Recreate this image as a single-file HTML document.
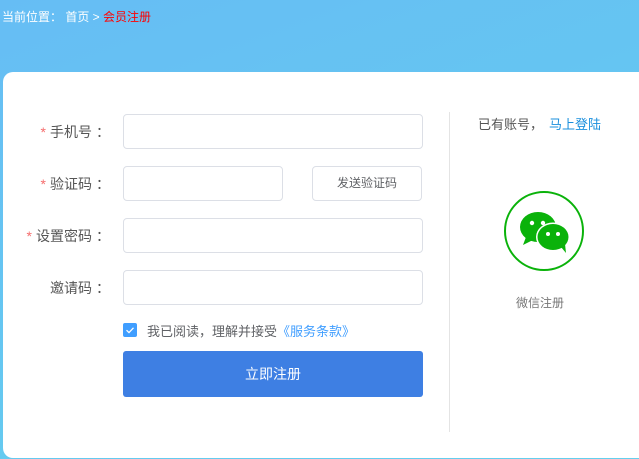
<!DOCTYPE html>
<html><head><meta charset="utf-8"><style>
*{margin:0;padding:0;box-sizing:border-box}
body{width:639px;height:459px;overflow:hidden;background:linear-gradient(160deg,#66bdf4,#64d0ee);font-family:"Liberation Sans","Noto Sans CJK SC",sans-serif;position:relative}
.bc{position:absolute;left:2px;top:8px;font-size:12px;color:#fff}
.bc span{color:#f00}
.card{position:absolute;left:3px;top:72px;width:650px;height:386px;background:#fff;border-radius:10px}
.lab{position:absolute;width:107px;text-align:right;font-size:14px;color:#555;left:0}
.lab i{color:#f56c6c;font-style:normal;margin-right:4px}
.lab b{font-weight:normal;padding-left:4px}
.in{position:absolute;border:1px solid #dcdfe6;border-radius:4px;height:35px}
.btn{position:absolute;left:309px;top:94px;width:110px;height:35px;border:1px solid #dcdfe6;border-radius:4px;font-size:12px;color:#606266;text-align:center;line-height:33px}
.chk{position:absolute;left:120px;top:251px;width:14px;height:14px;background:#409eff;border-radius:2px}
.agree{position:absolute;left:144px;top:249px;font-size:13px;color:#606266}
.agree a{color:#409eff}
.sub{position:absolute;left:120px;top:279px;width:300px;height:46px;background:#3e7fe3;border-radius:3px;color:#fff;font-size:14px;text-align:center;line-height:46px}
.div{position:absolute;left:446px;top:40px;width:1px;height:320px;background:#e4e4e4}
.have{position:absolute;left:475px;top:42px;font-size:13px;color:#555}
.have a{color:#1a8fdd;margin-left:6px}
.wx{position:absolute;left:501px;top:119px;width:80px;height:80px;border:2px solid #0ab20a;border-radius:50%}
.wxt{position:absolute;left:513px;top:222px;font-size:12px;color:#777}
</style></head><body>
<div class="bc">当前位置： 首页 &gt; <span>会员注册</span></div>
<div class="card">
<div class="lab" style="top:50px"><i>*</i>手机号<b>：</b></div>
<div class="in" style="left:120px;top:42px;width:300px"></div>
<div class="lab" style="top:102px"><i>*</i>验证码<b>：</b></div>
<div class="in" style="left:120px;top:94px;width:160px"></div>
<div class="btn">发送验证码</div>
<div class="lab" style="top:154px"><i>*</i>设置密码<b>：</b></div>
<div class="in" style="left:120px;top:146px;width:300px"></div>
<div class="lab" style="top:206px">邀请码<b>：</b></div>
<div class="in" style="left:120px;top:198px;width:300px"></div>
<div class="chk"><svg width="14" height="14"><path d="M3.5 7.2l2.5 2.4 4.5-4.8" stroke="#fff" stroke-width="1.3" fill="none"/></svg></div>
<div class="agree">我已阅读，理解并接受<a>《服务条款》</a></div>
<div class="sub">立即注册</div>
<div class="div"></div>
<div class="have">已有账号，<a>马上登陆</a></div>
<div class="wx"><svg width="76" height="76" viewBox="0 0 76 76">
<ellipse cx="32" cy="34" rx="18" ry="15" fill="#0ab20a"/><path d="M20 44l-3 8 10-5z" fill="#0ab20a"/>
<circle cx="26" cy="30" r="2.2" fill="#fff"/><circle cx="37" cy="30" r="2.2" fill="#fff"/>
<ellipse cx="47" cy="44" rx="17" ry="14.5" fill="#fff"/>
<ellipse cx="47" cy="44" rx="15.5" ry="13" fill="#0ab20a"/><path d="M55 54l5 6-1-9z" fill="#0ab20a"/>
<circle cx="42" cy="41" r="2" fill="#fff"/><circle cx="52" cy="41" r="2" fill="#fff"/>
</svg></div>
<div class="wxt">微信注册</div>
</div>
</body></html>
